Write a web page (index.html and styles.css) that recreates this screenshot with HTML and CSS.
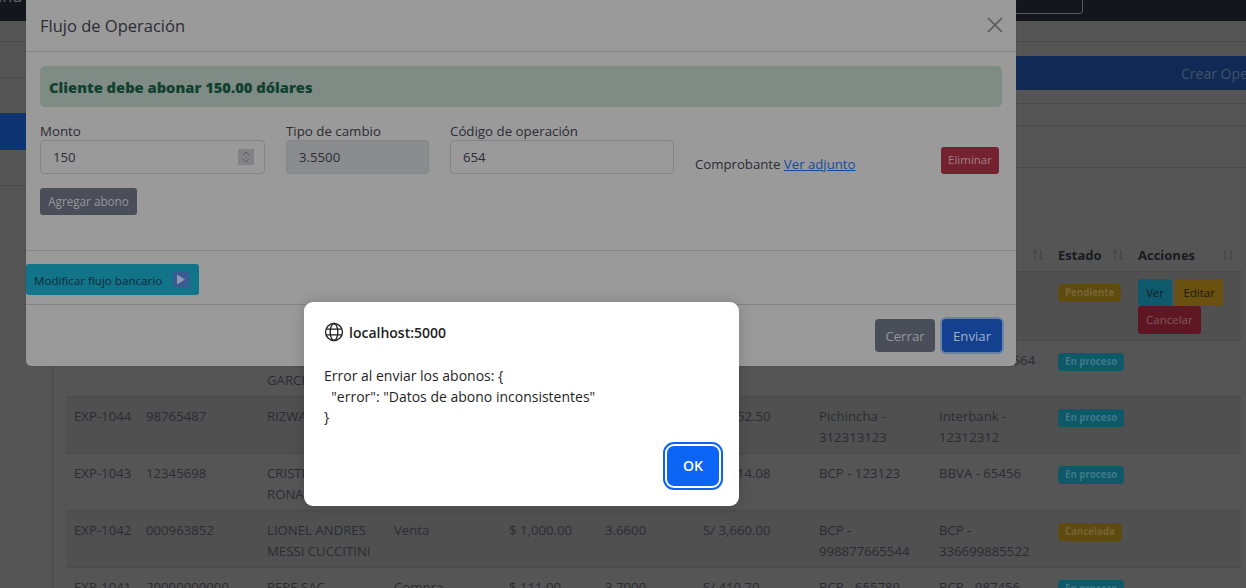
FILE: index.html
```html
<!DOCTYPE html>
<html lang="es">
<head>
  <meta charset="UTF-8">
  <title>Operaciones</title>
  <link rel="stylesheet" href="styles.css">
</head>
<body>

<svg class="defs" width="0" height="0">
  <symbol id="sort" viewBox="0 0 12 12">
    <path d="M3 11V1.5M1 3.5l2-2.2 2 2.2M9 1v9.5M7 8.5l2 2.2 2-2.2" fill="none" stroke="#414143" stroke-width="1"/>
  </symbol>
</svg>

<header class="topbar">
  <span class="brand">Menu Cambios</span>
  <div class="search-box"></div>
</header>

<div class="layout">
  <aside class="sidebar">
    <div class="side-item side-first"></div>
    <div class="side-item side-tall"></div>
    <div class="side-item side-tall"></div>
    <div class="side-item side-active"></div>
    <div class="side-item side-tall"></div>
  </aside>

  <main class="content">
    <div class="strip strip-top"></div>
    <div class="tabs">
      <div class="tab-active">Crear Operación</div>
    </div>
    <div class="strip strip-small"></div>
    <div class="strip strip-large"></div>

    <table class="ops">
      <colgroup>
        <col class="c-exp"><col class="c-doc"><col class="c-name"><col class="c-type"><col class="c-amount"><col class="c-rate"><col class="c-total"><col class="c-bank"><col class="c-bank2"><col class="c-state"><col class="c-actions">
      </colgroup>
      <thead>
        <tr>
          <th>Código <svg class="sort"><use href="#sort"/></svg></th>
          <th>Documento <svg class="sort"><use href="#sort"/></svg></th>
          <th>Cliente <svg class="sort"><use href="#sort"/></svg></th>
          <th>Tipo <svg class="sort"><use href="#sort"/></svg></th>
          <th>Monto <svg class="sort"><use href="#sort"/></svg></th>
          <th>TC <svg class="sort"><use href="#sort"/></svg></th>
          <th>Total <svg class="sort"><use href="#sort"/></svg></th>
          <th>Origen <svg class="sort"><use href="#sort"/></svg></th>
          <th>Destino <svg class="sort"><use href="#sort"/></svg></th>
          <th>Estado <svg class="sort"><use href="#sort"/></svg></th>
          <th>Acciones <svg class="sort"><use href="#sort"/></svg></th>
        </tr>
      </thead>
      <tbody>
        <tr class="row-first">
          <td>EXP-1046</td><td>45678912</td><td>JUAN PEREZ</td><td>Venta</td><td>$ 150.00</td><td>3.5500</td><td>S/ 532.50</td><td>BCP - 123456</td><td>BBVA - 654</td>
          <td><span class="badge b-yellow">Pendiente</span></td>
          <td>
            <span class="act a-info">Ver</span> <span class="act a-warn">Editar</span>
            <span class="act a-danger">Cancelar</span>
          </td>
        </tr>
        <tr>
          <td>EXP-1045</td><td>70123456</td><td>MARIA LOPEZ GARCIA</td><td>Compra</td><td>$ 200.00</td><td>3.7000</td><td>S/ 740.00</td><td>BCP - 998877</td><td>BCP - 12345564</td>
          <td><span class="badge b-teal">En proceso</span></td><td></td>
        </tr>
        <tr>
          <td>EXP-1044</td><td>98765487</td><td>RIZWAN KHAN</td><td>Venta</td><td>$ 300.00</td><td>3.8417</td><td>S/ 1,152.50</td><td>Pichincha - 312313123</td><td>Interbank - 12312312</td>
          <td><span class="badge b-teal">En proceso</span></td><td></td>
        </tr>
        <tr>
          <td>EXP-1043</td><td>12345698</td><td>CRISTIANO RONALDO</td><td>Compra</td><td>$ 300.00</td><td>3.7136</td><td>S/ 1,114.08</td><td>BCP - 123123</td><td>BBVA - 65456</td>
          <td><span class="badge b-teal">En proceso</span></td><td></td>
        </tr>
        <tr>
          <td>EXP-1042</td><td>000963852</td><td>LIONEL ANDRES MESSI CUCCITINI</td><td>Venta</td><td>$ 1,000.00</td><td>3.6600</td><td>S/ 3,660.00</td><td>BCP - 998877665544</td><td>BCP - 336699885522</td>
          <td><span class="badge b-yellow">Cancelada</span></td><td></td>
        </tr>
        <tr>
          <td>EXP-1041</td><td>20000000000</td><td>PEPE SAC</td><td>Compra</td><td>$ 111.00</td><td>3.7000</td><td>S/ 410.70</td><td>BCP - 655789</td><td>BCP - 987456</td>
          <td><span class="badge b-teal">En proceso</span></td><td></td>
        </tr>
      </tbody>
    </table>
  </main>
</div>

<section class="modal">
  <div class="modal-header">
    <h5 class="modal-title">Flujo de Operación</h5>
    <svg class="modal-close" width="16" height="16" viewBox="0 0 16 16"><path d="M1 1l14 14M15 1L1 15" stroke="#59595b" stroke-width="1.7" fill="none"/></svg>
  </div>
  <div class="modal-body">
    <div class="alert-ok">Cliente debe abonar 150.00 dólares</div>
    <div class="pay-row">
      <label class="field f-amount">
        <span>Monto</span>
        <span class="input-wrap">
          <input class="form-input" type="text" value="150">
          <svg class="spin" width="16" height="16" viewBox="0 0 16 16"><rect width="16" height="16" fill="#828284"/><path d="M5 6l3-3 3 3M5 10l3 3 3-3" stroke="#5c5c5f" stroke-width="1" fill="none"/></svg>
        </span>
      </label>
      <label class="field f-rate">
        <span>Tipo de cambio</span>
        <input class="form-input is-off" type="text" value="3.5500">
      </label>
      <label class="field f-code">
        <span>Código de operación</span>
        <input class="form-input" type="text" value="654">
      </label>
      <div class="receipt">Comprobante <a href="#">Ver adjunto</a></div>
      <button class="btn btn-del">Eliminar</button>
    </div>
    <button class="btn btn-add">Agregar abono</button>
  </div>
  <div class="modal-flow">
    <button class="btn btn-flow">Modificar flujo bancario
      <svg width="16" height="15" viewBox="0 0 16 15"><rect width="16" height="15" rx="1.5" fill="#3a5a92"/><path d="M4 2.5l8 5-8 5z" fill="#8f9ab0"/></svg>
    </button>
  </div>
  <div class="modal-footer">
    <button class="btn btn-close">Cerrar</button>
    <button class="btn btn-send">Enviar</button>
  </div>
</section>

<section class="dialog">
  <div class="dialog-origin">
    <svg width="20" height="20" viewBox="0 0 20 20" fill="none" stroke="#1f1f1f" stroke-width="1.3">
      <circle cx="10" cy="10" r="8.5"/>
      <ellipse cx="10" cy="10" rx="3.8" ry="8.5"/>
      <path d="M2 7.2h16M2 12.8h16"/>
    </svg>
    <span>localhost:5000</span>
  </div>
  <pre class="dialog-text">Error al enviar los abonos: {
  "error": "Datos de abono inconsistentes"
}</pre>
  <div class="dialog-actions">
    <button class="ok-btn">OK</button>
  </div>
</section>

</body>
</html>
```

FILE: styles.css
```css
* {
  box-sizing: border-box;
}
html, body {
  height: 100%;
}
body {
  margin: 0;
  overflow: hidden;
  background-color: #555556;
  color: #2c2c30;
  font-family: "Open Sans", "Noto Sans", sans-serif;
  font-size: 13.2px;
}
.defs {
  display: block;
  height: 0;
}

/* page behind the modals */
.topbar {
  height: 21px;
  background-color: #15151c;
  display: flex;
  justify-content: space-between;
  padding-right: 163px;
  overflow: hidden;
}
.brand {
  margin-top: -15px;
  margin-left: -21px;
  color: #6b6b6e;
  font-size: 16px;
}
.search-box {
  width: 300px;
  height: 24px;
  margin-top: -10px;
  border: 1px solid #5a5a5e;
  border-radius: 3px;
}
.layout {
  display: flex;
  height: 567px;
}
.sidebar {
  width: 53px;
  flex: none;
  border-right: 1px solid #4a4a4b;
}
.side-item {
  border-bottom: 1px solid #4a4a4b;
}
.side-first {
  height: 21px;
}
.side-tall {
  height: 36px;
}
.side-active {
  height: 37px;
  margin-top: -1px;
  background-color: #0e3571;
  border-bottom: none;
}
.content {
  flex: 1;
  min-width: 0;
}
.strip {
  border-bottom: 1px solid #4a4a4b;
}
.strip-top {
  height: 21px;
}
.strip-small {
  height: 22px;
}
.strip-large {
  height: 42px;
}
.tabs {
  height: 62px;
  padding: 14px 0;
  border-bottom: 1px solid #4a4a4b;
}
.tab-active {
  height: 34px;
  padding: 8px 0 0 1128px;
  background-color: #102a55;
  color: #43526b;
  font-size: 14px;
  white-space: nowrap;
  overflow: hidden;
}

/* operations table */
.ops {
  width: 1175px;
  margin: 71px 0 0 13px;
  border-collapse: collapse;
  table-layout: fixed;
}
.c-exp { width: 73px; }
.c-doc { width: 121px; }
.c-name { width: 127px; }
.c-type { width: 115px; }
.c-amount { width: 96px; }
.c-rate { width: 98px; }
.c-total { width: 116px; }
.c-bank { width: 120px; }
.c-bank2 { width: 119px; }
.c-state { width: 80px; }
.c-actions { width: 110px; }
.ops th {
  position: relative;
  height: 32px;
  padding: 6px 7px;
  border-bottom: 1px solid #4a4a4b;
  color: #1a1a1e;
  font-size: 13px;
  font-weight: 700;
  text-align: left;
  white-space: nowrap;
}
.sort {
  position: absolute;
  right: 7px;
  top: 10px;
  width: 12px;
  height: 12px;
}
.ops td {
  padding: 9px 7px 5px;
  border-bottom: 1px solid #4a4a4b;
  line-height: 20.9px;
  vertical-align: top;
}
.ops td:first-child {
  padding-left: 8px;
  padding-right: 0;
  white-space: nowrap;
}
.ops tbody tr:nth-child(odd) {
  background-color: #505051;
}
.row-first td {
  height: 69px;
}
.badge {
  display: inline-block;
  height: 18px;
  padding: 0 7px;
  border-radius: 4px;
  font-size: 9.7px;
  font-weight: 700;
  line-height: 18px;
  vertical-align: top;
  margin-top: 3px;
  white-space: nowrap;
}
.b-yellow {
  background-color: #5f4a10;
  color: #756535;
}
.b-teal {
  background-color: #0e5868;
  color: #3f7888;
}
.act {
  display: inline-block;
  height: 27px;
  margin-top: -2px;
  padding: 0 8px;
  border-radius: 3px;
  font-size: 11.5px;
  line-height: 27px;
  vertical-align: top;
}
.a-info {
  width: 34px;
  text-align: center;
  padding: 0;
  background-color: #0e5a6c;
  color: #0f1a1e;
}
.a-warn {
  background-color: #6a5110;
  color: #1e1a0c;
}
.a-danger {
  height: 28px;
  margin-top: 0;
  background-color: #5c1722;
  color: #85585f;
}

/* bootstrap style modal */
.modal {
  position: absolute;
  left: 26px;
  top: 0;
  width: 990px;
  height: 366px;
  background-color: #9a9a9b;
  border-radius: 0 0 5px 5px;
  box-shadow: 0 0 1px #333;
}
.modal-header {
  height: 52px;
  padding: 0 14px;
  display: flex;
  justify-content: space-between;
  align-items: center;
  border-bottom: 1px solid #848486;
}
.modal-title {
  margin: 0;
  color: #2c2c33;
  font-size: 16.5px;
  font-weight: 400;
}
.modal-close {
  margin-right: -1px;
  margin-top: -2px;
}
.modal-body {
  height: 199px;
  padding: 14px;
  border-bottom: 1px solid #848486;
}
.alert-ok {
  height: 41px;
  margin-right: 0;
  padding: 0 9px;
  border-radius: 5px;
  background-color: #7f8b85;
  color: #10402e;
  font-size: 14.7px;
  font-weight: 800;
  line-height: 42px;
}
.pay-row {
  display: flex;
  align-items: flex-end;
  margin-top: 16px;
}
.field {
  display: block;
  color: #2c2c33;
  font-size: 13.3px;
  line-height: 17px;
}
.field > span:first-child {
  display: block;
}
.f-amount {
  width: 225px;
  margin-right: 21px;
}
.f-rate {
  width: 143px;
  margin-right: 21px;
}
.f-code {
  width: 224px;
  margin-right: 21px;
}
.input-wrap {
  display: block;
  position: relative;
}
.form-input {
  display: block;
  width: 100%;
  height: 34px;
  padding: 0 12px;
  border: 1px solid #848488;
  border-radius: 4px;
  background-color: #9a9a9b;
  color: #2c2c33;
  font-family: inherit;
  font-size: 13.2px;
}
.is-off {
  background-color: #8b8c90;
}
.spin {
  position: absolute;
  right: 11px;
  top: 9px;
}
.receipt {
  width: 246px;
  padding-bottom: 1px;
  color: #2c2c33;
  font-size: 13.2px;
}
.receipt a {
  color: #164a9c;
}
.btn {
  border: none;
  border-radius: 3px;
  font-family: inherit;
}
.btn-del {
  width: 58px;
  height: 27px;
  padding: 0 0 2px;
  background-color: #742230;
  color: #a08088;
  font-size: 11.5px;
}
.btn-add {
  display: block;
  width: 97px;
  height: 27px;
  margin-top: 14px;
  padding: 0 0 2px;
  background-color: #4a4e58;
  color: #95979d;
  font-size: 11.7px;
}
.modal-flow {
  height: 54px;
  padding-top: 13px;
  border-bottom: 1px solid #848486;
}
.btn-flow {
  display: flex;
  align-items: center;
  gap: 11px;
  width: 173px;
  height: 31px;
  padding: 1px 0 0 8px;
  background-color: #127488;
  color: #0b2a3c;
  font-size: 11.6px;
  white-space: nowrap;
}
.btn-flow svg {
  margin-top: -1px;
}
.modal-footer {
  display: flex;
  justify-content: flex-end;
  gap: 7px;
  padding: 14px 14px 0;
}
.btn-close, .btn-send {
  width: 60px;
  height: 33px;
  padding: 0;
  border-radius: 4px;
  font-size: 13.2px;
}
.btn-close {
  background-color: #4a4e58;
  color: #95979d;
}
.btn-send {
  background-color: #14418f;
  color: #a0aec8;
  box-shadow: 0 0 0 2px #6a80aa;
}

/* browser alert */
.dialog {
  position: absolute;
  left: 304px;
  top: 302px;
  width: 435px;
  height: 204px;
  padding: 20px 20px 0;
  background-color: #fff;
  border-radius: 9px;
  box-shadow: 0 0 14px rgba(0, 0, 0, 0.18);
  color: #1f1f1f;
}
.dialog-origin {
  display: flex;
  align-items: center;
  gap: 5px;
  font-size: 14px;
  font-weight: 600;
}
.dialog-text {
  margin: 24px 0 0;
  font-family: inherit;
  font-size: 14px;
  line-height: 20.5px;
}
.dialog-actions {
  display: flex;
  justify-content: flex-end;
  margin-top: 18px;
}
.ok-btn {
  width: 52px;
  height: 40px;
  border: none;
  border-radius: 7px;
  background-color: #0b64f4;
  color: #fff;
  font-family: inherit;
  font-size: 14px;
  font-weight: 600;
  outline: 2px solid #0b64f4;
  outline-offset: 2px;
}
```
